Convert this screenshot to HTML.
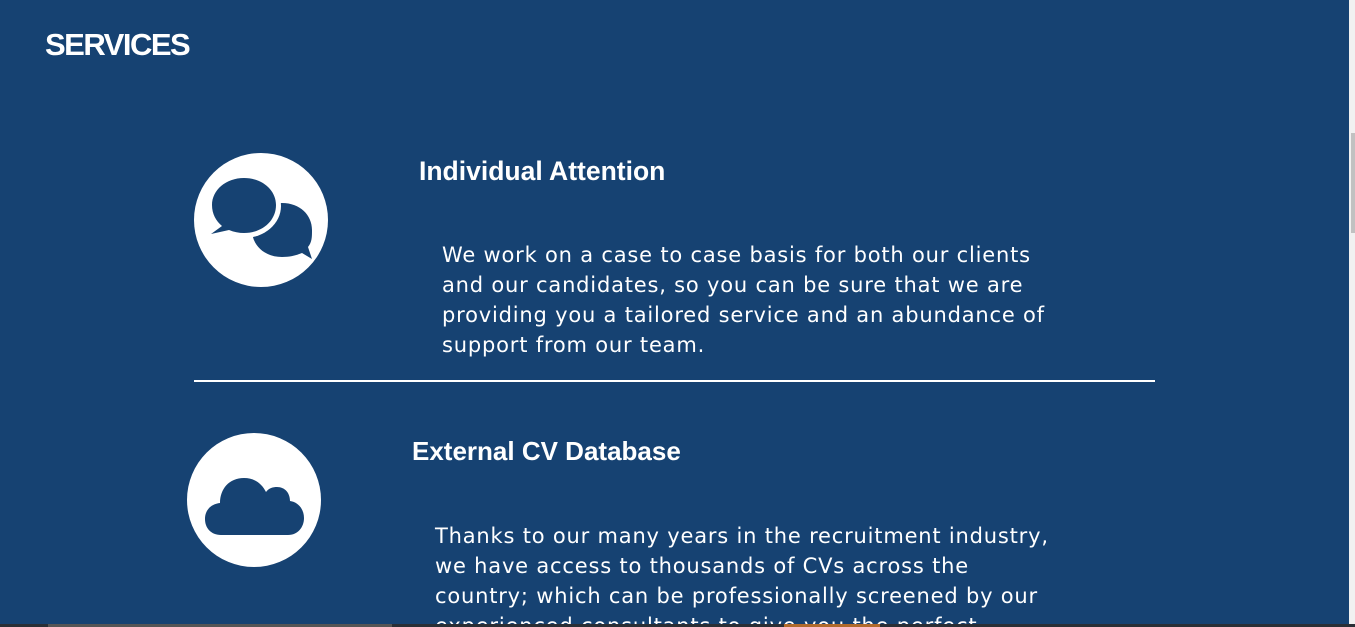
<!DOCTYPE html>
<html><head><meta charset="utf-8"><style>
html,body{margin:0;padding:0;width:1355px;height:627px;overflow:hidden;background:#164272;}
body{position:relative;font-family:"DejaVu Sans",Verdana,sans-serif;color:#fff;}
.h{position:absolute;font-family:"Liberation Sans",Arial,sans-serif;font-weight:bold;}
.p{position:absolute;font-size:21px;letter-spacing:0.8px;line-height:30px;}
.c{position:absolute;width:134px;height:134px;border-radius:50%;background:#fff;}
</style></head><body>
<div class="h" style="left:45px;top:27px;font-size:31px;letter-spacing:-1.5px">SERVICES</div>

<div class="c" style="left:194px;top:153px"></div>
<svg style="position:absolute;left:194px;top:153px" width="134" height="134" viewBox="0 0 134 134">
 <path d="M88 50 C70 50 58 62 58 77 C58 92 70 104 88 104 C97 104 103 102 108 100 L118 106 L114 94 C118 89 118 84 118 77 C118 62 106 50 88 50Z" fill="#164272"/>
 <ellipse cx="50" cy="53" rx="37" ry="32" fill="#fff"/>
 <path d="M50 25 C32 25 18 37 18 52 C18 61 22 68 28 73 L17 81 L35 77 C40 79 45 80 50 80 C68 80 82 68 82 52 C82 37 68 25 50 25Z" fill="#164272"/>
</svg>
<div class="h" style="left:419px;top:156px;font-size:26.5px">Individual Attention</div>
<div class="p" style="left:442px;top:240px">We work on a case to case basis for both our clients<br>and our candidates, so you can be sure that we are<br>providing you a tailored service and an abundance of<br>support from our team.</div>
<div style="position:absolute;left:194px;top:380px;width:961px;height:2px;background:#fff"></div>

<div class="c" style="left:187px;top:433px"></div>
<svg style="position:absolute;left:187px;top:433px" width="134" height="134" viewBox="0 0 134 134">
 <path d="M34 102 C24 102 18 95 18 86 C18 77 24 71 33 70 C33 56 42 45 57 45 C68 45 75 51 79 59 C82 55 86 54 90 54 C98 54 103 60 103 68 C111 69 117 76 117 85 C117 94 111 102 101 102 Z" fill="#164272"/>
</svg>
<div class="h" style="left:412px;top:436px;font-size:26px">External CV Database</div>
<div class="p" style="left:435px;top:521px">Thanks to our many years in the recruitment industry,<br>we have access to thousands of CVs across the<br>country; which can be professionally screened by our<br>experienced consultants to give you the perfect</div>

<div style="position:absolute;left:0;top:624px;width:1355px;height:3px;background:#2a2f36"></div>
<div style="position:absolute;left:48px;top:624px;width:344px;height:3px;background:#555"></div>
<div style="position:absolute;left:784px;top:624px;width:96px;height:3px;background:#b06a2c"></div>
<div style="position:absolute;left:1349px;top:0;width:6px;height:624px;background:#f1f1f1"></div>
<div style="position:absolute;left:1351px;top:133px;width:4px;height:100px;background:#c1c1c1"></div>
</body></html>
